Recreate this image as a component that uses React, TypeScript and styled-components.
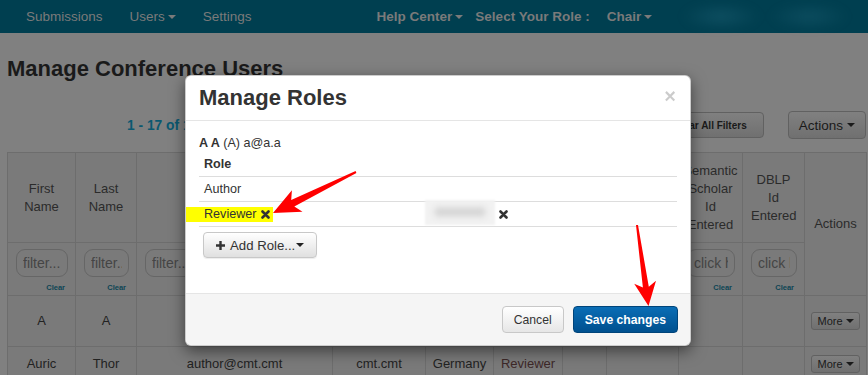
import styled, { createGlobalStyle } from "styled-components"

type Pt = [number, number]

// the page sits behind the dialog's backdrop, so it is painted in its darkened tones
const dim = {
    page: "#808080",
    nav: "#003f50",
    navText: "#7a7a7a",
    title: "#1a1a1a",
    link: "#0b5870",
    table: "#7a7a7a",
    border: "#6d6d6d",
    headText: "#2b2b2b",
    text: "#222",
    placeholder: "#454545",
    button: "linear-gradient(#808080, #707070)",
    buttonBorder: "#616161",
}

const GlobalStyle = createGlobalStyle`
    * { box-sizing: border-box; }
    html, body { margin: 0; padding: 0; }
    body {
        font-family: "Liberation Sans", Arial, Helvetica, sans-serif;
        font-size: 13px;
        color: #333;
        background: ${dim.page};
        width: 868px;
        height: 375px;
        overflow: hidden;
    }
`

// header columns of the users grid (Actions is added separately, it spans two rows)
// labels of the columns that the dialog covers are left out
const columns = [
    { w: 68, label: "First Name", filter: "filter..." },
    { w: 61, label: "Last Name", filter: "filter..." },
    { w: 196, label: "", filter: "filter..." },
    { w: 93, label: "", filter: "filter..." },
    { w: 68, label: "", filter: "filter..." },
    { w: 69, label: "", filter: "filter..." },
    { w: 44, label: "", filter: "" },
    { w: 72, label: "", filter: "click here" },
    { w: 64, label: "Semantic Scholar Id Entered", filter: "click here", tight: true },
    { w: 62, label: "DBLP Id Entered", filter: "click here" },
]

const users = [
    { height: 51, cells: ["A", "A", "", "", "", "", "", "", "", ""] },
    { height: 35, cells: ["Auric", "Thor", "author@cmt.cmt", "cmt.cmt", "Germany", "Reviewer", "", "", "", ""] },
]

function arrowPoints(tail: Pt, tip: Pt, headLen: number, headHalf: number, neck: number, tailHalf: number) {
    const dx = tip[0] - tail[0]
    const dy = tip[1] - tail[1]
    const len = Math.hypot(dx, dy)
    const ux = dx / len
    const uy = dy / len
    const nx = -uy
    const ny = ux
    const bx = tip[0] - ux * headLen
    const by = tip[1] - uy * headLen
    const jx = bx + ux * 5
    const jy = by + uy * 5
    const pts: Pt[] = [
        [tail[0] + nx * tailHalf, tail[1] + ny * tailHalf],
        [jx + nx * neck, jy + ny * neck],
        [bx + nx * headHalf, by + ny * headHalf],
        tip,
        [bx - nx * headHalf, by - ny * headHalf],
        [jx - nx * neck, jy - ny * neck],
        [tail[0] - nx * tailHalf, tail[1] - ny * tailHalf],
    ]
    return pts.map(p => p.map(v => v.toFixed(1)).join(",")).join(" ")
}

function RemoveIcon() {
    return (
        <svg width="9" height="9" viewBox="0 0 9 9">
            <path d="M1.5 1.5 L7.5 7.5 M7.5 1.5 L1.5 7.5" stroke="#333" strokeWidth="2.6" strokeLinecap="round" />
        </svg>
    )
}

function PlusIcon() {
    return (
        <svg width="9" height="9" viewBox="0 0 9 9">
            <path d="M3.3 0h2.4v3.3H9v2.4H5.7V9H3.3V5.7H0V3.3h3.3z" fill="#333" />
        </svg>
    )
}

export default function App() {
    return (
        <>
            <GlobalStyle />
            <Page>
                <NavBar>
                    <NavLeft>
                        <NavLink>Submissions</NavLink>
                        <NavLink>Users <Caret /></NavLink>
                        <NavLink>Settings</NavLink>
                    </NavLeft>
                    <NavRight>
                        <NavLink $bold>Help Center<Caret /></NavLink>
                        <NavLink $bold>Select Your Role :</NavLink>
                        <NavLink $bold $push>Chair <Caret /></NavLink>
                    </NavRight>
                    <NavBlur />
                </NavBar>

                <Main>
                    <Title>Manage Conference Users</Title>
                    <Toolbar>
                        <Paging>1 - 17 of 17</Paging>
                        <ToolButtons>
                            <GrayButton $small>Clear All Filters</GrayButton>
                            <GrayButton>Actions <Caret /></GrayButton>
                        </ToolButtons>
                    </Toolbar>

                    <UsersTable>
                        <colgroup>
                            {columns.map((c, i) => <Col key={i} $w={c.w} />)}
                            <Col $w={62} />
                        </colgroup>
                        <thead>
                            <tr>
                                {columns.map((c, i) => <HeadCell key={i} $tight={c.tight}>{c.label}</HeadCell>)}
                                <HeadCell rowSpan={2}>Actions</HeadCell>
                            </tr>
                            <tr>
                                {columns.map((c, i) => (
                                    <FilterCell key={i}>
                                        {c.filter && (
                                            <>
                                                <FilterInput placeholder={c.filter} readOnly />
                                                <ClearLink>Clear</ClearLink>
                                            </>
                                        )}
                                    </FilterCell>
                                ))}
                            </tr>
                        </thead>
                        <tbody>
                            {users.map((u, i) => (
                                <tr key={i}>
                                    {u.cells.map((c, j) => (
                                        <BodyCell key={j} $h={u.height} $role={j === 5}>{c}</BodyCell>
                                    ))}
                                    <BodyCell $h={u.height}>
                                        <MoreButton>More <Caret /></MoreButton>
                                    </BodyCell>
                                </tr>
                            ))}
                        </tbody>
                    </UsersTable>
                </Main>

                <Modal>
                    <ModalHeader>
                        <ModalTitle>Manage Roles</ModalTitle>
                        <CloseX>×</CloseX>
                    </ModalHeader>
                    <ModalBody>
                        <UserLine><b>A A</b> (A) a@a.a</UserLine>
                        <RoleRow $head>
                            <RoleCell>Role</RoleCell>
                            <RoleCell />
                        </RoleRow>
                        <RoleRow>
                            <RoleCell>Author</RoleCell>
                            <RoleCell />
                        </RoleRow>
                        <RoleRow>
                            <RoleCell>
                                <Highlight>Reviewer <RemoveIcon /></Highlight>
                            </RoleCell>
                            <RoleCell>
                                <Redacted><RedactedText /></Redacted>
                                <RemoveIcon />
                            </RoleCell>
                        </RoleRow>
                        <AddRoleButton>
                            <PlusIcon />
                            Add Role...<Caret />
                        </AddRoleButton>
                    </ModalBody>
                    <ModalFooter>
                        <FooterButton>Cancel</FooterButton>
                        <FooterButton $primary>Save changes</FooterButton>
                    </ModalFooter>
                </Modal>

                <Annotations viewBox="0 0 868 375">
                    <polygon points={arrowPoints([356, 172], [273, 213], 27, 12, 3.5, 1)} fill="#ff0000" />
                    <polygon points={arrowPoints([637, 225], [648.5, 306], 24, 11, 3, 1)} fill="#ff0000" />
                </Annotations>
            </Page>
        </>
    )
}


const Page = styled.div`
    position: relative;
    width: 868px;
    height: 375px;
    overflow: hidden;
    background: ${dim.page};
`

const NavBar = styled.div`
    height: 33px;
    background-color: ${dim.nav};
    display: flex;
    align-items: center;
    font-size: 13.5px;
`

const NavLeft = styled.div`
    display: flex;
    gap: 27px;
    padding-left: 26px;
`

const NavRight = styled.div`
    display: flex;
    gap: 12px;
    margin-left: 125px;
`

const NavLink = styled.span<{ $bold?: boolean, $push?: boolean }>`
    color: ${dim.navText};
    font-weight: ${p => p.$bold ? "bold" : "normal"};
    margin-left: ${p => p.$push ? "5px" : "0"};
    display: inline-flex;
    align-items: center;
    gap: 3px;
    white-space: nowrap;
`

const NavBlur = styled.div`
    flex: 1;
    align-self: stretch;
    margin-left: 20px;
    background:
        radial-gradient(ellipse 40px 14px at 25% 50%, rgba(40, 110, 130, 0.35), transparent),
        radial-gradient(ellipse 40px 14px at 70% 50%, rgba(40, 110, 130, 0.3), transparent);
    filter: blur(4px);
`

const Caret = styled.span`
    display: inline-block;
    width: 0;
    height: 0;
    border-top: 4px solid currentColor;
    border-left: 4px solid transparent;
    border-right: 4px solid transparent;
    vertical-align: middle;
`

const Main = styled.div`
    padding: 0 2px 0 7px;
`

const Title = styled.h1`
    margin: 23px 0 0;
    font-size: 22px;
    line-height: 26px;
    font-weight: bold;
    color: ${dim.title};
`

const Toolbar = styled.div`
    display: flex;
    align-items: center;
    height: 28px;
    margin-top: 29px;
`

const Paging = styled.span`
    margin-left: 120px;
    font-size: 13.8px;
    font-weight: bold;
    color: ${dim.link};
`

const ToolButtons = styled.div`
    margin-left: auto;
    display: flex;
    align-items: center;
    gap: 24px;
`

const GrayButton = styled.button<{ $small?: boolean }>`
    font-family: inherit;
    height: ${p => p.$small ? "26px" : "28px"};
    padding: ${p => p.$small ? "0 16px" : "0 10px"};
    font-size: ${p => p.$small ? "10px" : "13.5px"};
    font-weight: ${p => p.$small ? "bold" : "normal"};
    color: ${dim.title};
    background: ${dim.button};
    border: 1px solid ${dim.buttonBorder};
    border-radius: 4px;
    display: inline-flex;
    align-items: center;
    gap: 4px;
`

const UsersTable = styled.table`
    margin-top: 13px;
    width: 859px;
    table-layout: fixed;
    border-collapse: collapse;
    background: ${dim.table};
    font-size: 13px;
    line-height: 18px;
`

const Col = styled.col<{ $w: number }>`
    width: ${p => p.$w}px;
`

const HeadCell = styled.th<{ $tight?: boolean }>`
    height: 90px;
    padding: ${p => p.$tight ? "4px 3px" : "4px 8px"};
    border: 1px solid ${dim.border};
    font-weight: normal;
    color: ${dim.headText};
    text-align: center;
    vertical-align: middle;
`

const FilterCell = styled.td`
    height: 52px;
    padding: 6px 7px 0 8px;
    border: 1px solid ${dim.border};
    vertical-align: top;
    text-align: right;
`

const FilterInput = styled.input`
    display: block;
    width: 100%;
    height: 28px;
    padding: 0 6px;
    border: 1px solid #666;
    border-radius: 9px;
    background: transparent;
    font-family: inherit;
    font-size: 14px;
    color: ${dim.placeholder};

    &::placeholder {
        color: ${dim.placeholder};
    }
`

const ClearLink = styled.span`
    display: inline-block;
    margin-top: 2px;
    margin-right: 3px;
    font-size: 7.5px;
    line-height: 9px;
    font-weight: bold;
    color: #0d4555;
`

const BodyCell = styled.td<{ $h: number, $role?: boolean }>`
    height: ${p => p.$h}px;
    padding: 0 4px;
    border: 1px solid ${dim.border};
    text-align: center;
    vertical-align: middle;
    color: ${p => p.$role ? "#3d2828" : dim.text};
    white-space: nowrap;
    overflow: hidden;
`

const MoreButton = styled.span`
    display: inline-flex;
    align-items: center;
    gap: 3px;
    height: 18px;
    padding: 0 5px;
    font-size: 11px;
    color: ${dim.title};
    background: ${dim.button};
    border: 1px solid ${dim.buttonBorder};
    border-radius: 3px;
`

const Modal = styled.div`
    position: absolute;
    top: 75px;
    left: 185px;
    width: 506px;
    z-index: 2;
    background: #fff;
    border: 1px solid rgba(0, 0, 0, 0.2);
    border-radius: 6px;
    box-shadow: 0 5px 15px rgba(0, 0, 0, 0.5);
    display: flex;
    flex-direction: column;
`

const ModalHeader = styled.div`
    display: flex;
    align-items: center;
    justify-content: space-between;
    padding: 9px 14px 9px 13px;
    border-bottom: 1px solid #e5e5e5;
`

const ModalTitle = styled.h4`
    margin: 0;
    font-size: 22px;
    line-height: 26px;
    font-weight: bold;
    color: #333;
`

const CloseX = styled.span`
    font-size: 20px;
    font-weight: bold;
    line-height: 1;
    color: #000;
    opacity: 0.2;
    margin-top: -4px;
`

const ModalBody = styled.div`
    padding: 13px 13px 35px;
    font-size: 12.6px;
`

const UserLine = styled.div`
    height: 18px;
    line-height: 18px;
    color: #333;
`

const RoleRow = styled.div<{ $head?: boolean }>`
    display: grid;
    grid-template-columns: 221px 1fr;
    align-items: center;
    height: 25px;
    border-bottom: 1px solid #ddd;
    font-weight: ${p => p.$head ? "bold" : "normal"};
`

const RoleCell = styled.div`
    display: flex;
    align-items: center;
    padding-left: 5px;
    gap: 4px;
`

const Highlight = styled.span`
    display: inline-flex;
    align-items: center;
    gap: 4px;
    height: 15px;
    margin-left: -18px;
    padding: 0 3px 0 18px;
    background: #ffff00;
    color: #333;
`

const Redacted = styled.div`
    width: 70px;
    height: 25px;
    margin-top: -4px;
    background: #f2f2f2;
    display: flex;
    align-items: center;
    justify-content: center;
    filter: blur(1px);
`

const RedactedText = styled.div`
    width: 50px;
    height: 8px;
    background: #d0d0d0;
    filter: blur(3px);
`

const AddRoleButton = styled.button`
    margin: 5px 0 0 4px;
    height: 26px;
    padding: 0 12px;
    display: inline-flex;
    align-items: center;
    gap: 5px;
    font-family: inherit;
    font-size: 13.2px;
    color: #333;
    background: linear-gradient(#fff, #e0e0e0);
    border: 1px solid #c8c8c8;
    border-radius: 4px;
    box-shadow: 0 1px 1px rgba(0, 0, 0, 0.075);

    ${Caret} {
        margin-left: -4px;
        color: #222;
    }
`

const ModalFooter = styled.div`
    display: flex;
    justify-content: flex-end;
    gap: 9px;
    padding: 12px;
    border-top: 1px solid #e5e5e5;
    background: #f5f5f5;
    border-radius: 0 0 6px 6px;
`

const FooterButton = styled.button<{ $primary?: boolean }>`
    height: 27px;
    padding: 0 11px;
    font-family: inherit;
    font-size: 12.2px;
    font-weight: ${p => p.$primary ? "bold" : "normal"};
    color: ${p => p.$primary ? "#fff" : "#333"};
    background: ${p => p.$primary
        ? "linear-gradient(#0a6db5, #00508f)"
        : "linear-gradient(#fff, #e6e6e6)"};
    border: 1px solid ${p => p.$primary ? "#00447a" : "#c8c8c8"};
    border-radius: 4px;
`

const Annotations = styled.svg`
    position: absolute;
    top: 0;
    left: 0;
    width: 868px;
    height: 375px;
    z-index: 3;
    pointer-events: none;
`
